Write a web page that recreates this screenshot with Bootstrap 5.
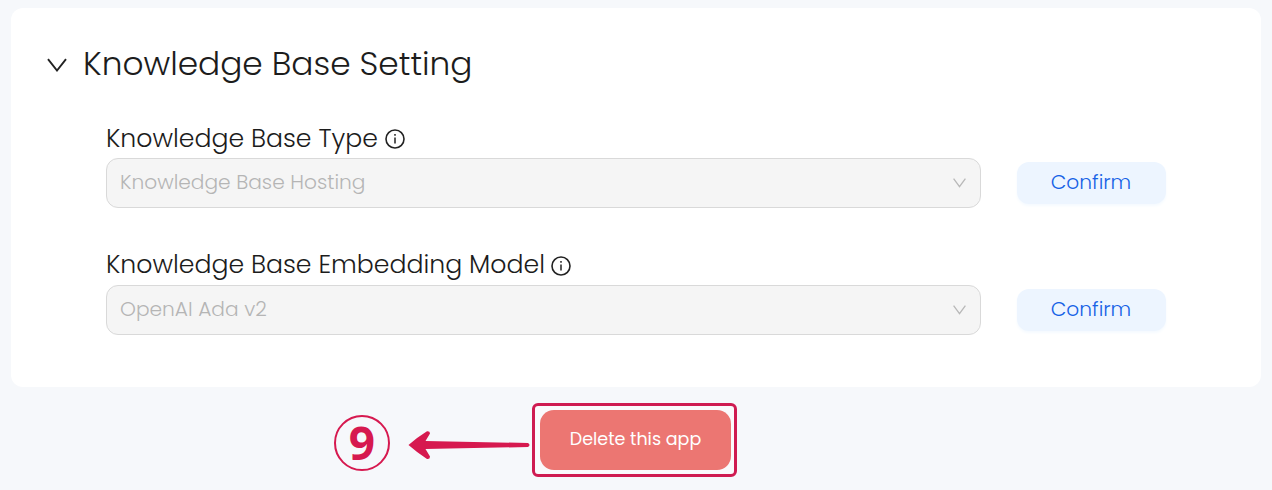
<!DOCTYPE html>
<html lang="en">
<head>
<meta charset="utf-8">
<meta name="viewport" content="width=device-width, initial-scale=1">
<title>Knowledge Base Setting</title>
<link href="https://cdn.jsdelivr.net/npm/bootstrap@5.3.0/dist/css/bootstrap.min.css" rel="stylesheet">
<style>
body{background:#f6f8fb;font-family:Poppins,Inter,sans-serif;font-weight:300;color:#222;height:490px;overflow:hidden}
.panel{margin:8px 11px 0;height:379px;border-radius:12px;background:#fff;padding:34px 95px 0 36px}
.panel-title{font-size:32.8px;line-height:44px;font-weight:300;color:#1c1c1c}
.title-icon{width:20px;height:14px;margin-right:16px;margin-top:2px}
.fields{padding:35px 0 0 59px}
.field-label{font-size:25.2px;line-height:36px;height:37px;white-space:nowrap;padding-bottom:1px;color:#1c1c1c}
.field-label.model{padding-bottom:3px}
.field-label.model .info{margin:1px 0 0 6px}
.info{width:20px;height:20px;margin:-1px 0 0 7px}
.picker{width:875px;height:50px;border:1px solid #d9d9d9;border-radius:12px;background:#f5f5f5;color:#b5b5b5;font-size:20.2px;padding:0 14px 0 13px}
.picker span,.confirm span{margin-bottom:2px}
.picker svg{margin-bottom:1px}
.btn.confirm{width:149px;height:42px;border:0;border-radius:12px;background:#edf5ff;color:#1762e6;font-size:20.2px;font-weight:300;padding:0 1px 0 0;box-shadow:0 2px 3px #f5faff}
.field-gap{margin-bottom:40px}
.frame{width:205px;height:74px;border:3px solid #cf1b51;border-radius:6px;background:#fafafc;padding-left:1px}
.btn.remove{width:191px;height:60px;border:0;border-radius:14px;background:#ec7672;color:#fff;font-size:17.5px;font-weight:400;padding:0 0 2px 1px}
.step{width:56px;height:56px;margin:6px 0 0 1px;border:2px solid #d6194f;border-radius:50%;color:#d6194f;font:700 46px/1 "Open Sans","Noto Sans",sans-serif}
.step span{margin-bottom:2px}
.pointer{margin-top:10px}
.footer-row{padding:16px 0 0 333px}
</style>
</head>
<body>
<main class="panel">
  <h1 class="panel-title d-flex align-items-center mb-0"><svg class="title-icon" viewBox="0 0 20 14" fill="none" stroke="#222" stroke-width="1.9"><path d="M1 1.2 10 12.5 19 1.2"/></svg><span>Knowledge Base Setting</span></h1>
  <div class="fields">
    <label class="field-label d-flex align-items-center"><span>Knowledge Base Type</span><svg class="info" viewBox="0 0 20 20"><circle cx="10" cy="10" r="9" fill="none" stroke="#222" stroke-width="1.6"/><path d="M10 8.4v6.2M10 5v1.8" stroke="#222" stroke-width="1.5"/></svg></label>
    <div class="d-flex align-items-center justify-content-between field-gap">
      <div class="picker d-flex align-items-center justify-content-between"><span>Knowledge Base Hosting</span><svg width="13" height="10" viewBox="0 0 13 10" fill="none" stroke="#b8b8b8" stroke-width="1.3"><path d="M.6.6 6.5 8.7 12.4.6"/></svg></div>
      <button class="btn confirm d-flex align-items-center justify-content-center"><span>Confirm</span></button>
    </div>
    <label class="field-label model d-flex align-items-center"><span>Knowledge Base Embedding Model</span><svg class="info" viewBox="0 0 20 20"><circle cx="10" cy="10" r="9" fill="none" stroke="#222" stroke-width="1.6"/><path d="M10 8.4v6.2M10 5v1.8" stroke="#222" stroke-width="1.5"/></svg></label>
    <div class="d-flex align-items-center justify-content-between">
      <div class="picker d-flex align-items-center justify-content-between"><span>OpenAI Ada v2</span><svg width="13" height="10" viewBox="0 0 13 10" fill="none" stroke="#b8b8b8" stroke-width="1.3"><path d="M.6.6 6.5 8.7 12.4.6"/></svg></div>
      <button class="btn confirm d-flex align-items-center justify-content-center"><span>Confirm</span></button>
    </div>
  </div>
</main>
<div class="footer-row d-flex align-items-center">
  <div class="step d-flex align-items-center justify-content-center"><span>9</span></div>
  <svg class="pointer" width="142" height="32" viewBox="390 429 142 32" fill="#d6194f"><path d="M408.500 445Q417 437.500 427 431.300Q430 431 430 433.500L425.500 441L528 443Q531 445 528 447L425.500 449L430 456.500Q430 459.500 427 459Q417 452.500 408.500 445Z"/></svg>
  <div class="frame d-flex align-items-center justify-content-center"><button class="btn remove">Delete this app</button></div>
</div>
<script src="https://cdn.jsdelivr.net/npm/bootstrap@5.3.0/dist/js/bootstrap.bundle.min.js"></script>
</body>
</html>
